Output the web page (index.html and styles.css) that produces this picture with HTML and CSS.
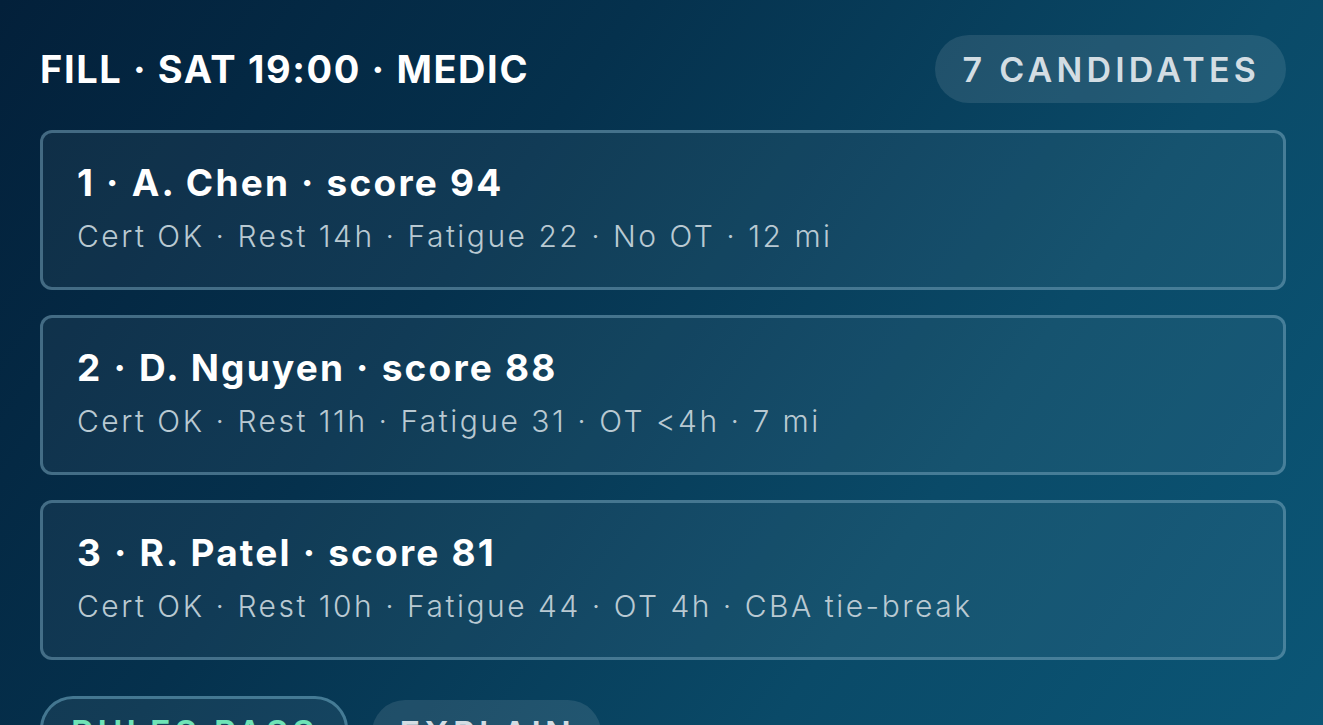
FILE: index.html
```html
<!doctype html>
<html>
	<head>
	<meta charset="UTF-8">
	<link rel="stylesheet" href="styles.css">
	</head>

	<body>
		<main class="fill">
			<div class="top">
				<div class="shift">FILL · SAT 19:00 · MEDIC</div>
				<div class="count">7 CANDIDATES</div>
			</div>

			<div class="cands">
				<div class="cand">
					<div class="name">1 · A. Chen · score 94</div>
					<div class="info">Cert OK · Rest 14h · Fatigue 22 · No OT · 12 mi</div>
				</div>
				<div class="cand">
					<div class="name">2 · D. Nguyen · score 88</div>
					<div class="info">Cert OK · Rest 11h · Fatigue 31 · OT &lt;4h · 7 mi</div>
				</div>
				<div class="cand">
					<div class="name">3 · R. Patel · score 81</div>
					<div class="info">Cert OK · Rest 10h · Fatigue 44 · OT 4h · CBA tie-break</div>
				</div>
			</div>

			<div class="acts">
				<div class="chip pass">RULES PASS</div>
				<div class="chip">EXPLAIN</div>
			</div>
		</main>
	</body>
</html>
```

FILE: styles.css
```css
html, body {margin:0; height:100%; overflow:hidden;}
body {background:linear-gradient(125deg, #03203a 0%, #05314d 35%, #0a4a68 70%, #0b5676 100%); font-family:Inter, "Open Sans", sans-serif; color:#fff;}

.fill {padding:35px 37px 0 40px;}

.top {display:flex; justify-content:space-between; align-items:center; height:68px;}
.shift {font-size:38px; font-weight:700; letter-spacing:1.6px;}
.count {height:68px; padding:0 26px 0 28px; display:flex; align-items:center; border-radius:34px; background:rgba(255,255,255,0.1); color:#d3dde3; font-size:34px; font-weight:600; letter-spacing:4.2px;}

.cands {display:flex; flex-direction:column; gap:25px; margin-top:27px;}
.cand {border:3px solid rgba(120,165,190,0.5); border-radius:12px; background:rgba(255,255,255,0.05); padding:26px 34px 29px;}
.name {font-size:37px; font-weight:700; line-height:48px; letter-spacing:2.2px;}
.info {font-size:30px; font-weight:300; line-height:44px; margin-top:7px; color:#b9c9d2; letter-spacing:2.5px;}

.acts {display:flex; align-items:flex-start; gap:24px; margin-top:36px;}
.chip {height:66px; margin-top:4px; padding:0 26px 0 28px; display:flex; align-items:center; border-radius:33px; background:rgba(255,255,255,0.1); color:#d3dde3; font-size:34px; font-weight:600; letter-spacing:4.2px;}
.chip.pass {margin-top:0; border:3px solid rgba(110,170,195,0.55); color:#6fe3b6; background:rgba(255,255,255,0.06);}
```
